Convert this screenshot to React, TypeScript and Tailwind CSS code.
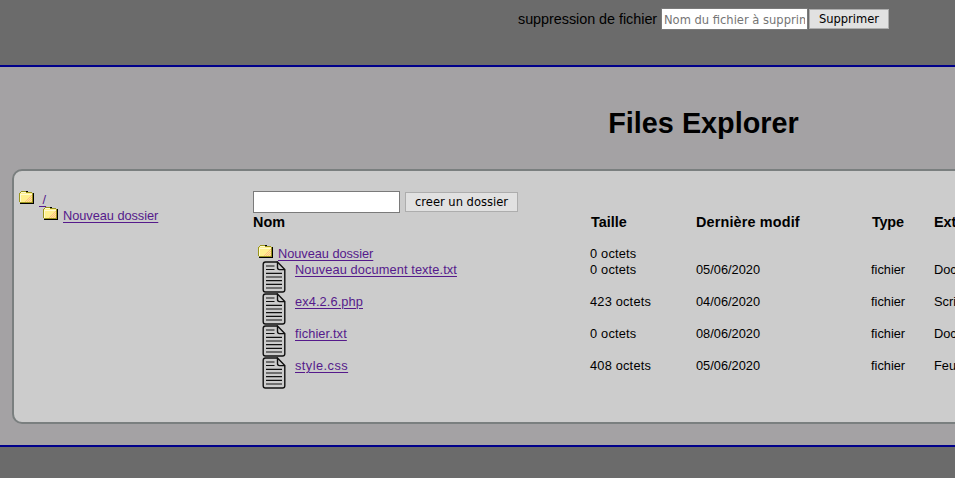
import React from "react";

const files = [
  { name: "Nouveau document texte.txt", tracking: "tracking-[0.1px]", size: "0 octets", date: "05/06/2020", ext: "Document texte" },
  { name: "ex4.2.6.php", tracking: "tracking-[0.1px]", size: "423 octets", date: "04/06/2020", ext: "Script PHP" },
  { name: "fichier.txt", tracking: "tracking-[0.12px]", size: "0 octets", date: "08/06/2020", ext: "Document texte" },
  { name: "style.css", tracking: "tracking-[0.45px]", size: "408 octets", date: "05/06/2020", ext: "Feuille de style" },
];

const columns = "grid grid-cols-[337px_106px_175px_63px_130px]";
const link = "relative top-px text-[#551a8b] underline underline-offset-[2px] decoration-1";
const control = "font-['DejaVu_Sans_Condensed','DejaVu_Sans',sans-serif] text-[12.8px]";

function Folder() {
  return (
    <svg className="block h-[13px] w-[15px] shrink-0" viewBox="0 0 15 13" shapeRendering="crispEdges">
      <path d="M1 2h1v-1h5v1h6v9H1z" fill="#fff08e" />
      <path d="M12 4h1v1h-1zM11 5h1v1h-1zM10 6h1v1h-1zM12 6h1v1h-1zM9 7h1v1H9zM11 7h1v1h-1zM8 8h1v1H8zM10 8h1v1h-1zM12 8h1v1h-1zM7 9h1v1H7zM9 9h1v1H9zM11 9h1v1h-1zM6 10h1v1H6zM8 10h1v1H8zM10 10h1v1h-1zM12 10h1v1h-1z" fill="#ffbd86" />
      <path d="M1 3h12v1H1zM1 3h1v8H1zM2 1h5v1H2z" fill="#fffbd0" />
      <path d="M2 0h5v1H2zM1 1h1v1H1zM7 1h6v1H7zM0 2h1v9H0zM13 2h1v9h-1zM1 11h13v1H1z" fill="#99941c" />
      <path d="M7 0h2v1H7zM14 2h1v10h-1zM1 12h14v1H1z" fill="#000" />
    </svg>
  );
}

function Doc() {
  return (
    <svg className="block h-[32px] w-[24px] shrink-0" viewBox="0 0 24 32" fill="none" stroke="#101010">
      <path d="M15.5 1H3.5Q1.2 1 1.2 3.3V28.7Q1.2 31 3.5 31H20.5Q22.8 31 22.8 28.7V8.5L15.5 1V6.5Q15.5 8.6 17.5 8.6H22.6" strokeWidth="1.4" />
      <path d="M4 5H12.5M4 8.5H12.5M4 12.3H20M4 16H20M4 19.6H20M4 23.4H20M4 27H20" strokeWidth="1.2" />
    </svg>
  );
}

export default function App() {
  return (
    <div className="flex h-[478px] w-[955px] flex-col overflow-hidden bg-[#a4a2a4] font-['Liberation_Sans',Arial,sans-serif] text-[12.8px] leading-4 text-black">
      <header className="flex h-[67px] shrink-0 items-start border-b-2 border-[#00008b] bg-[#6b6b6b] pl-[518px] pt-2">
        <label htmlFor="remove" className="w-[143px] whitespace-nowrap text-[14.4px] leading-[23px] tracking-[-0.04px]">suppression de fichier</label>
        <input id="remove" placeholder="Nom du fichier à supprimer" className={`h-[22px] w-[147px] border border-[#7a7a7a] bg-white px-[2px] placeholder:text-[#757575] ${control}`} />
        <button className={`ml-px mt-px h-5 w-20 border border-[#adadad] bg-[#e1e1e1] leading-[18px] ${control}`}>Supprimer</button>
      </header>
      <main className="h-[378px] shrink-0 pl-3">
        <h1 className="w-[1383px] pt-10 text-center text-[28.8px] font-bold leading-[33px]">Files Explorer</h1>
        <section className="mt-[29px] flex h-[255px] w-[1382px] rounded-[10px] border-2 border-[#7a7f7f] bg-[#ccc]">
          <nav className="w-[239px] pl-[5px] pt-5">
            <div className="flex h-4">
              <Folder />
              <a className={`ml-[5px] whitespace-pre ${link}`}> /</a>
            </div>
            <div className="flex h-4 pl-6">
              <Folder />
              <a className={`ml-[5px] whitespace-nowrap tracking-[-0.05px] ${link}`}>Nouveau dossier</a>
            </div>
          </nav>
          <div className="pt-5">
            <div className="flex h-[22px] items-start">
              <input aria-label="dossier" className="h-[22px] w-[147px] border border-[#7a7a7a] bg-white" />
              <button className={`ml-[5px] mt-px h-5 w-[113px] whitespace-nowrap border border-[#adadad] bg-[#e1e1e1] leading-[18px] ${control}`}>creer un dossier</button>
            </div>
            <div className={`${columns} h-8 pt-px text-[14.4px] font-bold leading-[17px]`}>
              <span>Nom</span><span className="pl-px">Taille</span><span className="tracking-[0.16px]">Dernière modif</span><span className="pl-px tracking-[-0.2px]">Type</span><span>Extension</span>
            </div>
            <div className={`${columns} h-4`}>
              <div className="flex pl-[5px]">
                <Folder />
                <a className={`ml-[5px] tracking-[-0.05px] ${link}`}>Nouveau dossier</a>
              </div>
              <span className="pt-px tracking-[0.2px]">0 octets</span>
            </div>
            {files.map((file) => (
              <div key={file.name} className={`${columns} h-8`}>
                <div className="flex pl-[9px]">
                  <Doc />
                  <a className={`ml-[9px] ${file.tracking} ${link}`}>{file.name}</a>
                </div>
                <span className="pt-px tracking-[0.2px]">{file.size}</span>
                <span className="pt-px">{file.date}</span>
                <span className="pt-px">fichier</span>
                <span className="whitespace-nowrap pt-px">{file.ext}</span>
              </div>
            ))}
          </div>
        </section>
      </main>
      <footer className="flex-1 border-t-2 border-[#00008b] bg-[#6b6b6b]" />
    </div>
  );
}
